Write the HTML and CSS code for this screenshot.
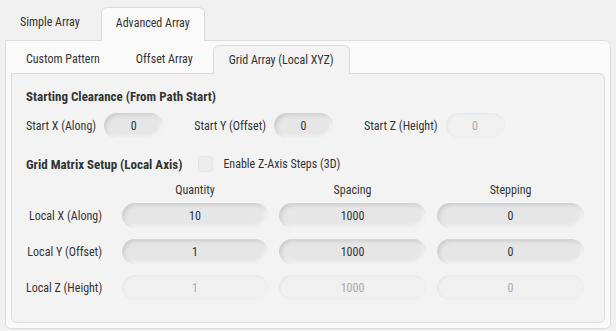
FILE: index.html
```html
<!DOCTYPE html>
<html lang="en">
<head>
    <meta charset="UTF-8">
    <meta name="viewport" content="width=device-width, initial-scale=1.0">
    <title>Advanced Array</title>
    <link rel="stylesheet" href="styles.css">
</head>
<body>

    <div class="tabs outer-tabs">
        <div class="tab">Simple Array</div>
        <div class="tab active">Advanced Array</div>
    </div>
    <div class="outer-panel">
        <div class="tabs inner-tabs">
            <div class="tab">Custom Pattern</div>
            <div class="tab">Offset Array</div>
            <div class="tab active">Grid Array (Local XYZ)</div>
        </div>
        <div class="inner-panel">
            <div class="section-title">Starting Clearance (From Path Start)</div>
            <div class="start-row">
                <label class="field-label">Start X (Along)</label>
                <input class="pill small" type="text" value="0">
                <label class="field-label">Start Y (Offset)</label>
                <input class="pill small" type="text" value="0">
                <label class="field-label">Start Z (Height)</label>
                <input class="pill small" type="text" value="0" disabled>
            </div>

            <div class="matrix-head">
                <div class="section-title">Grid Matrix Setup (Local Axis)</div>
                <label class="check">
                    <span class="box"></span>
                    Enable Z-Axis Steps (3D)
                </label>
            </div>

            <div class="grid">
                <div></div>
                <div class="col-head">Quantity</div>
                <div class="col-head">Spacing</div>
                <div class="col-head">Stepping</div>

                <div class="row-label">Local X (Along)</div>
                <input class="pill" type="text" value="10">
                <input class="pill" type="text" value="1000">
                <input class="pill" type="text" value="0">

                <div class="row-label">Local Y (Offset)</div>
                <input class="pill" type="text" value="1">
                <input class="pill" type="text" value="1000">
                <input class="pill" type="text" value="0">

                <div class="row-label">Local Z (Height)</div>
                <input class="pill" type="text" value="1" disabled>
                <input class="pill" type="text" value="1000" disabled>
                <input class="pill" type="text" value="0" disabled>
            </div>
        </div>
    </div>

</body>
</html>
```

FILE: styles.css
```css
body {
    font-family: Roboto, "DejaVu Sans Condensed", sans-serif;
    font-stretch: 75%;
    font-size: 12px;
    color: #333;
    margin: 0;
    padding: 7px 5px 0 5px;
    background-color: #f0f0f0;
    white-space: nowrap;
}
.tabs {
    display: flex;
    align-items: flex-end;
}
.tab {
    height: 33px;
    line-height: 31px;
    color: #333;
}
.tab.active {
    background-color: #fafafa;
    border: 1px solid #dcdcdc;
    border-bottom: none;
    border-radius: 6px 6px 0 0;
    position: relative;
    margin-bottom: -1px;
}
.outer-tabs .tab {
    padding: 0 21px 0 15px;
}
.outer-tabs .tab.active {
    padding: 0 14px;
}
.outer-panel {
    background-color: #fafafa;
    border: 1px solid #dcdcdc;
    border-radius: 0 6px 6px 6px;
    padding: 4px 5px 5px 5px;
    height: 278px;
}
.inner-tabs .tab {
    height: 28px;
    line-height: 28px;
    padding: 0 18px;
}
.inner-tabs .tab:first-child {
    padding-left: 15px;
}
.inner-tabs .tab.active {
    background-color: #f3f3f3;
    padding: 0 15px;
    margin-left: 2px;
}
.inner-panel {
    background-color: #f3f3f3;
    border: 1px solid #dcdcdc;
    border-radius: 0 6px 6px 6px;
    padding: 15px 14px 0 14px;
    height: 233px;
}
.section-title {
    font-weight: bold;
    font-size: 13px;
}
.start-row {
    display: flex;
    align-items: center;
    margin-top: 9px;
}
.field-label {
    margin-right: 8px;
}
.pill {
    font-family: inherit;
    font-stretch: inherit;
    font-size: 12px;
    color: #333;
    text-align: center;
    height: 25px;
    box-sizing: border-box;
    border: none;
    border-radius: 13px;
    background-color: #e6e6e6;
    box-shadow: inset 2px 2px 4px rgba(0, 0, 0, 0.12), inset -2px -2px 4px rgba(255, 255, 255, 0.7);
    outline: none;
    padding: 0;
}
.pill:disabled {
    background-color: #f0f0f0;
    color: #aaa;
    box-shadow: inset 1px 1px 3px rgba(0, 0, 0, 0.05);
}
.pill.small {
    width: 59px;
    margin-right: 31px;
}
.matrix-head {
    display: flex;
    align-items: center;
    margin-top: 18px;
}
.check {
    display: flex;
    align-items: center;
    margin-left: 16px;
}
.box {
    width: 15px;
    height: 16px;
    box-sizing: border-box;
    border: 1px solid #e6e6e6;
    border-radius: 3px;
    background-color: #ececec;
    margin-right: 10px;
}
.grid {
    display: grid;
    grid-template-columns: 85px 146px 147px 147px;
    column-gap: 11px;
    row-gap: 11px;
    margin-top: 11px;
    align-items: center;
}
.col-head {
    text-align: center;
    margin-bottom: -5px;
}
.row-label {
    text-align: right;
    padding-right: 9px;
}
```
